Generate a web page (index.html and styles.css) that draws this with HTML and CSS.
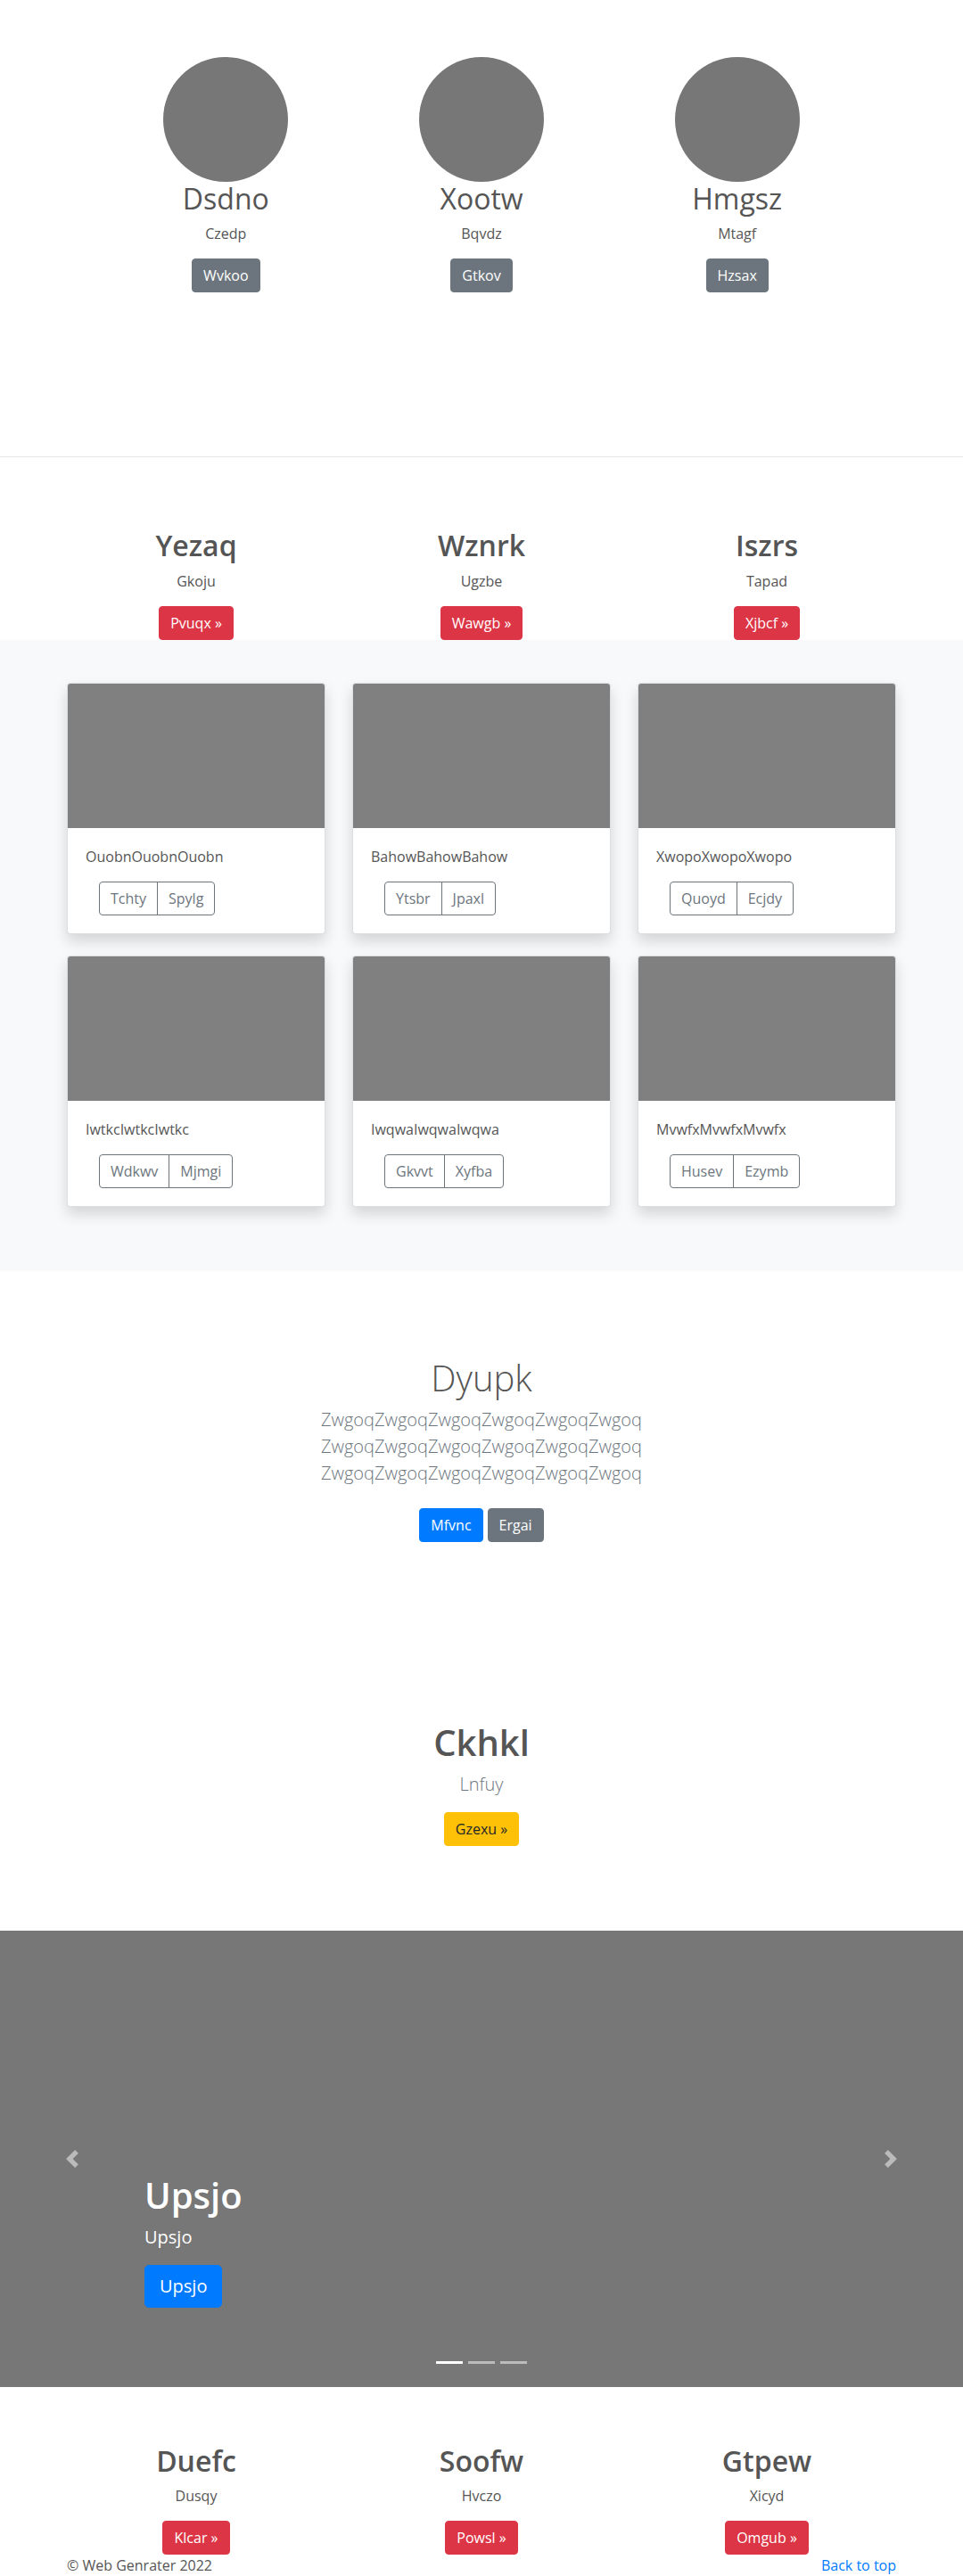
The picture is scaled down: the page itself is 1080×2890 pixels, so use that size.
FILE: index.html
```html
<!DOCTYPE html>
<html lang="en">
<head>
<meta charset="utf-8">
<title>Web Genrater</title>
<link rel="stylesheet" href="styles.css">
</head>
<body>

<section class="marketing">
  <div class="marketing-row">
    <div class="feature">
      <div class="avatar"></div>
      <h2 class="feature-title">Dsdno</h2>
      <p class="feature-text">Czedp</p>
      <p class="feature-action"><a class="btn btn-secondary" href="#">Wvkoo</a></p>
    </div>
    <div class="feature">
      <div class="avatar"></div>
      <h2 class="feature-title">Xootw</h2>
      <p class="feature-text">Bqvdz</p>
      <p class="feature-action"><a class="btn btn-secondary" href="#">Gtkov</a></p>
    </div>
    <div class="feature">
      <div class="avatar"></div>
      <h2 class="feature-title">Hmgsz</h2>
      <p class="feature-text">Mtagf</p>
      <p class="feature-action"><a class="btn btn-secondary" href="#">Hzsax</a></p>
    </div>
  </div>
</section>

<hr class="divider">

<section class="highlights">
  <div class="highlight">
    <h2 class="highlight-title">Yezaq</h2>
    <p class="highlight-text">Gkoju</p>
    <p class="highlight-action"><a class="btn btn-danger" href="#">Pvuqx &raquo;</a></p>
  </div>
  <div class="highlight">
    <h2 class="highlight-title">Wznrk</h2>
    <p class="highlight-text">Ugzbe</p>
    <p class="highlight-action"><a class="btn btn-danger" href="#">Wawgb &raquo;</a></p>
  </div>
  <div class="highlight">
    <h2 class="highlight-title">Iszrs</h2>
    <p class="highlight-text">Tapad</p>
    <p class="highlight-action"><a class="btn btn-danger" href="#">Xjbcf &raquo;</a></p>
  </div>
</section>

<section class="album">
  <div class="album-grid">
    <div class="card">
      <div class="card-img"></div>
      <div class="card-body">
        <p class="card-text">OuobnOuobnOuobn</p>
        <div class="btn-group"><a class="btn btn-outline" href="#">Tchty</a><a class="btn btn-outline" href="#">Spylg</a></div>
      </div>
    </div>
    <div class="card">
      <div class="card-img"></div>
      <div class="card-body">
        <p class="card-text">BahowBahowBahow</p>
        <div class="btn-group"><a class="btn btn-outline" href="#">Ytsbr</a><a class="btn btn-outline" href="#">Jpaxl</a></div>
      </div>
    </div>
    <div class="card">
      <div class="card-img"></div>
      <div class="card-body">
        <p class="card-text">XwopoXwopoXwopo</p>
        <div class="btn-group"><a class="btn btn-outline" href="#">Quoyd</a><a class="btn btn-outline" href="#">Ecjdy</a></div>
      </div>
    </div>
    <div class="card">
      <div class="card-img"></div>
      <div class="card-body">
        <p class="card-text">IwtkcIwtkcIwtkc</p>
        <div class="btn-group"><a class="btn btn-outline" href="#">Wdkwv</a><a class="btn btn-outline" href="#">Mjmgi</a></div>
      </div>
    </div>
    <div class="card">
      <div class="card-img"></div>
      <div class="card-body">
        <p class="card-text">IwqwaIwqwaIwqwa</p>
        <div class="btn-group"><a class="btn btn-outline" href="#">Gkvvt</a><a class="btn btn-outline" href="#">Xyfba</a></div>
      </div>
    </div>
    <div class="card">
      <div class="card-img"></div>
      <div class="card-body">
        <p class="card-text">MvwfxMvwfxMvwfx</p>
        <div class="btn-group"><a class="btn btn-outline" href="#">Husev</a><a class="btn btn-outline" href="#">Ezymb</a></div>
      </div>
    </div>
  </div>
</section>

<section class="hero">
  <div class="hero-inner">
    <h1 class="hero-title">Dyupk</h1>
    <p class="hero-lead">ZwgoqZwgoqZwgoqZwgoqZwgoqZwgoq ZwgoqZwgoqZwgoqZwgoqZwgoqZwgoq ZwgoqZwgoqZwgoqZwgoqZwgoqZwgoq</p>
    <div class="hero-actions">
      <a class="btn btn-primary" href="#">Mfvnc</a>
      <a class="btn btn-secondary" href="#">Ergai</a>
    </div>
  </div>
</section>

<section class="cta">
  <h1 class="cta-title">Ckhkl</h1>
  <p class="cta-lead">Lnfuy</p>
  <div class="cta-action"><a class="btn btn-warning" href="#">Gzexu &raquo;</a></div>
</section>

<div class="carousel">
  <a class="carousel-control carousel-prev" href="#">
    <svg class="carousel-icon" viewBox="0 0 8 8" width="20" height="20"><path fill="#fff" d="M5.25 0l-4 4 4 4 1.5-1.5-2.5-2.5 2.5-2.5-1.5-1.5z"/></svg>
  </a>
  <div class="carousel-caption">
    <h1 class="caption-title">Upsjo</h1>
    <p class="caption-text">Upsjo</p>
    <div class="caption-action"><a class="btn btn-primary btn-lg" href="#">Upsjo</a></div>
  </div>
  <a class="carousel-control carousel-next" href="#">
    <svg class="carousel-icon" viewBox="0 0 8 8" width="20" height="20"><path fill="#fff" d="M2.75 0l-1.5 1.5 2.5 2.5-2.5 2.5 1.5 1.5 4-4-4-4z"/></svg>
  </a>
  <ol class="carousel-indicators">
    <li class="indicator active"></li>
    <li class="indicator"></li>
    <li class="indicator"></li>
  </ol>
</div>

<section class="highlights">
  <div class="highlight">
    <h2 class="highlight-title">Duefc</h2>
    <p class="highlight-text">Dusqy</p>
    <p class="highlight-action"><a class="btn btn-danger" href="#">Klcar &raquo;</a></p>
  </div>
  <div class="highlight">
    <h2 class="highlight-title">Soofw</h2>
    <p class="highlight-text">Hvczo</p>
    <p class="highlight-action"><a class="btn btn-danger" href="#">Powsl &raquo;</a></p>
  </div>
  <div class="highlight">
    <h2 class="highlight-title">Gtpew</h2>
    <p class="highlight-text">Xicyd</p>
    <p class="highlight-action"><a class="btn btn-danger" href="#">Omgub &raquo;</a></p>
  </div>
</section>

<footer class="footer">
  <p class="footer-copy">&copy; Web Genrater 2022</p>
  <p class="footer-top"><a class="footer-link" href="#">Back to top</a></p>
</footer>

</body>
</html>
```

FILE: styles.css
```css
* {
  box-sizing: border-box;
}

html, body {
  margin: 0;
  padding: 0;
}

body {
  font-family: "Open Sans", "Noto Sans", sans-serif;
  font-size: 16px;
  line-height: 1.5;
  color: #555;
  background: #fff;
}

h1, h2, p {
  margin: 0;
}

/* Buttons */
.btn {
  display: inline-block;
  padding: 6px 12px;
  font-size: 16px;
  line-height: 1.5;
  border: 1px solid transparent;
  border-radius: 4px;
  text-decoration: none;
  color: #fff;
  white-space: nowrap;
  vertical-align: middle;
}

.btn-secondary { background: #6c757d; border-color: #6c757d; }
.btn-danger { background: #dc3545; border-color: #dc3545; }
.btn-primary { background: #007bff; border-color: #007bff; }
.btn-warning { background: #ffc107; border-color: #ffc107; color: #212529; }

.btn-lg {
  padding: 8px 16px;
  font-size: 20px;
  border-radius: 5px;
}

.btn-outline {
  background: transparent;
  border-color: #6c757d;
  color: #6c757d;
}

/* Marketing */
.marketing {
  padding-top: 64px;
}

.marketing-row {
  width: 860px;
  margin: 0 auto;
  display: grid;
  grid-template-columns: repeat(3, 1fr);
  text-align: center;
}

.avatar {
  width: 140px;
  height: 140px;
  border-radius: 50%;
  background: #777;
  margin: 0 auto;
}

.feature-title {
  font-size: 32px;
  line-height: 1.2;
  font-weight: 400;
  margin-bottom: 8px;
}

.feature-text {
  margin: 0 12px 16px;
}

.divider {
  border: 0;
  border-top: 1px solid rgba(0, 0, 0, 0.1);
  height: 0;
  margin: 184px 0 80px;
}

/* Highlights */
.highlights {
  width: 960px;
  margin: 0 auto;
  display: grid;
  grid-template-columns: repeat(3, 1fr);
  text-align: center;
}

.highlight-title {
  font-size: 32px;
  line-height: 1.2;
  font-weight: 600;
  margin-bottom: 8px;
}

.highlight-text {
  margin-bottom: 16px;
}

/* Album */
.album {
  background: #f8f9fa;
  padding: 48px 0 72px;
}

.album-grid {
  width: 930px;
  margin: 0 auto;
  display: grid;
  grid-template-columns: repeat(3, 1fr);
  column-gap: 30px;
  row-gap: 24px;
}

.card {
  background: #fff;
  border: 1px solid rgba(0, 0, 0, 0.125);
  border-radius: 4px;
  overflow: hidden;
  box-shadow: 0 8px 16px rgba(0, 0, 0, 0.15);
}

.card-img {
  height: 162px;
  background: #808080;
}

.card-body {
  padding: 20px;
}

.card-text {
  margin-bottom: 16px;
}

.btn-group {
  display: inline-flex;
  margin-left: 15px;
}

.btn-group .btn + .btn {
  margin-left: -1px;
}

.btn-group .btn:first-child {
  border-top-right-radius: 0;
  border-bottom-right-radius: 0;
}

.btn-group .btn:last-child {
  border-top-left-radius: 0;
  border-bottom-left-radius: 0;
}

/* Hero */
.hero {
  padding: 96px 0;
  text-align: center;
}

.hero-inner {
  width: 610px;
  margin: 0 auto;
}

.hero-title {
  font-size: 40px;
  line-height: 1.2;
  font-weight: 300;
  margin-bottom: 8px;
}

.hero-lead {
  font-size: 20px;
  font-weight: 300;
  color: #6c757d;
  margin-bottom: 16px;
}

.hero-actions {
  display: flex;
  justify-content: center;
  gap: 5px;
  padding: 8px 0;
  margin-bottom: 16px;
}

/* CTA */
.cta {
  padding: 81px 0 95px;
  text-align: center;
}

.cta-title {
  font-size: 40px;
  line-height: 1.2;
  font-weight: 600;
  margin-bottom: 8px;
}

.cta-lead {
  font-size: 20px;
  font-weight: 300;
  color: #6c757d;
  margin-bottom: 16px;
}

/* Carousel */
.carousel {
  position: relative;
  height: 512px;
  background: #777;
  margin-bottom: 64px;
}

.carousel-control {
  position: absolute;
  top: 0;
  bottom: 0;
  width: 15%;
  display: flex;
  align-items: center;
  justify-content: center;
  opacity: 0.5;
}

.carousel-prev { left: 0; }
.carousel-next { right: 0; }

.carousel-icon {
  display: block;
}

.carousel-caption {
  position: absolute;
  left: 15%;
  right: 15%;
  bottom: 89px;
  color: #fff;
  text-align: left;
}

.caption-title {
  font-size: 40px;
  line-height: 1.2;
  font-weight: 600;
  margin-bottom: 8px;
}

.caption-text {
  font-size: 20px;
  margin-bottom: 16px;
}

.caption-action {
  display: flex;
}

.carousel-indicators {
  position: absolute;
  left: 0;
  right: 0;
  bottom: 26px;
  margin: 0;
  padding: 0;
  list-style: none;
  display: flex;
  justify-content: center;
  gap: 6px;
}

.indicator {
  width: 30px;
  height: 3px;
  background: rgba(255, 255, 255, 0.5);
}

.indicator.active {
  background: #fff;
}

/* Footer */
.footer {
  width: 930px;
  margin: 0 auto;
  display: flex;
  justify-content: space-between;
}

.footer-link {
  color: #007bff;
  text-decoration: none;
}
```
